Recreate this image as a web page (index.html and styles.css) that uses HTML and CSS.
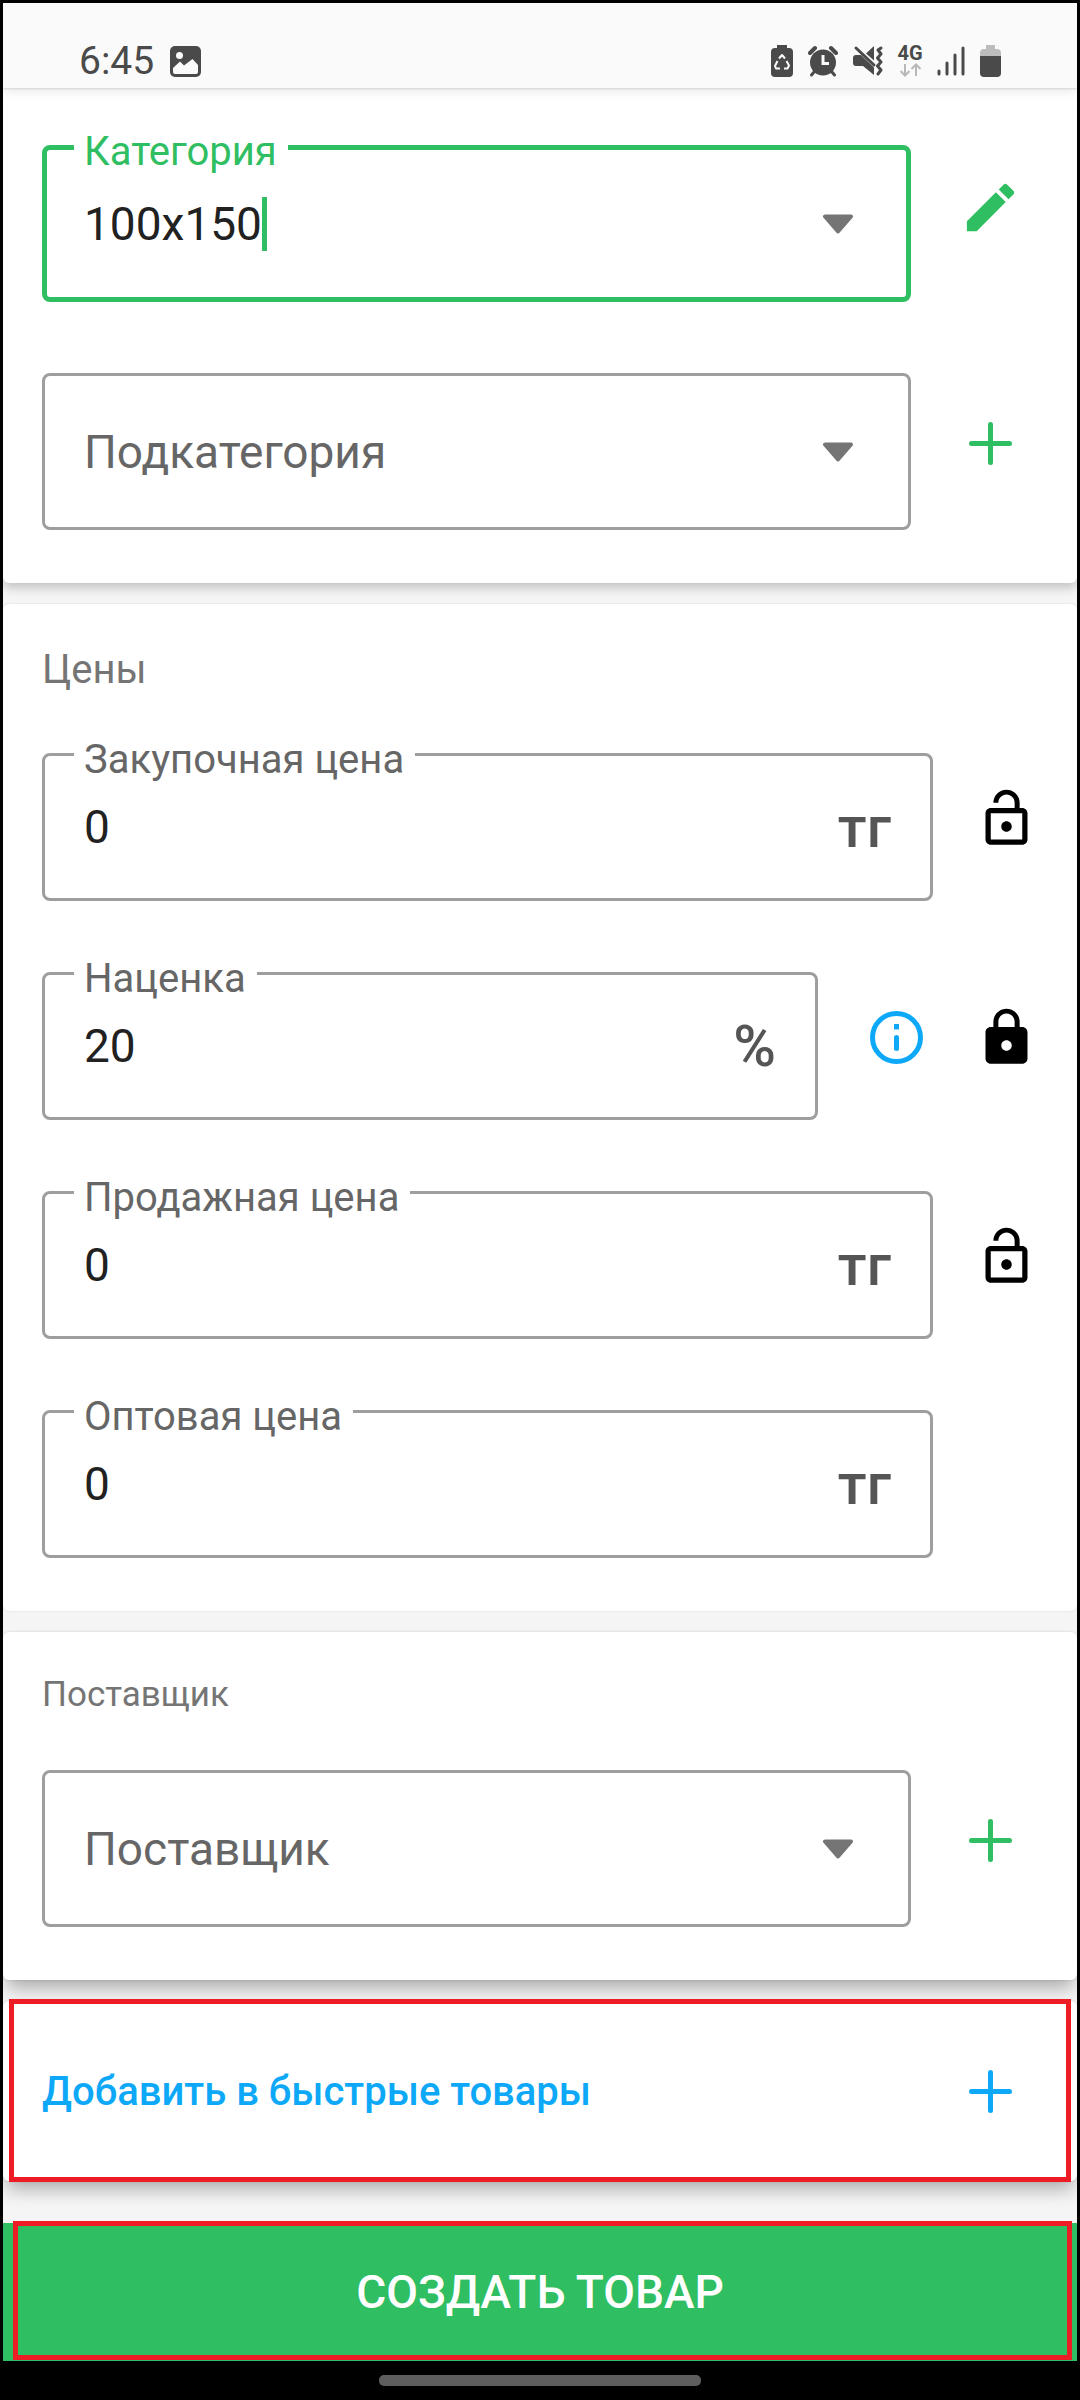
FILE: index.html
```html
<!DOCTYPE html>
<html lang="ru">
<head>
<meta charset="utf-8">
<meta name="viewport" content="width=device-width, initial-scale=1">
<title>Создать товар</title>
<link rel="stylesheet" href="styles.css">
</head>
<body>
<svg class="sprite" aria-hidden="true">
  <symbol id="plus" viewBox="0 0 63 63"><path d="M31.500 12.500v38M12.500 31.500h38" fill="none" stroke="currentColor" stroke-width="5" stroke-linecap="round"/></symbol>
  <symbol id="arrow" viewBox="0 0 32 20"><path d="M3 2.500h26L16 17.500z" fill="currentColor" stroke="currentColor" stroke-width="4" stroke-linejoin="round"/></symbol>
  <symbol id="lock-open" viewBox="0 0 24 24"><path fill="currentColor" d="M12 17c1.100 0 2-.9 2-2s-.9-2-2-2-2 .9-2 2 .9 2 2 2zm6-9h-1V6c0-2.760-2.240-5-5-5S7 3.240 7 6h1.900c0-1.710 1.390-3.100 3.100-3.100 1.710 0 3.100 1.390 3.100 3.100v2H6c-1.100 0-2 .9-2 2v10c0 1.100.9 2 2 2h12c1.100 0 2-.9 2-2V10c0-1.100-.9-2-2-2zm0 12H6V10h12v10z"/></symbol>
</svg>

<header class="status">
  <div class="status-group">
    <span class="clock">6:45</span>
    <svg class="status-icon" width="32" height="34" viewBox="0 0 32 34" aria-hidden="true">
      <rect x="0" y="2" width="31" height="31" rx="5" fill="#4a4a4a"/>
      <circle cx="9.500" cy="11.500" r="3.500" fill="#fafafa"/>
      <path d="M3 24l7-6.500 4 4L22.500 15l5.500 6v7q0 2-2 2H5q-2 0-2-2z" fill="#fafafa"/>
    </svg>
  </div>
  <div class="status-group status-group--end">
    <svg width="22" height="34" viewBox="0 0 22 34" aria-hidden="true">
      <path d="M6 1h10v3h2q4 0 4 4v21q0 4-4 4H4q-4 0-4-4V8q0-4 4-4h2z" fill="#4a4a4a"/>
      <path d="M8 14.500l3-3.500 3 3.500M15.500 17l2.500 4.500-1.500 3H13M9 24.500H5L4 22l2.500-5" fill="none" stroke="#fafafa" stroke-width="2" stroke-linejoin="round"/>
    </svg>
    <svg width="30" height="34" viewBox="0 0 30 34" aria-hidden="true">
      <circle cx="15" cy="18.500" r="13" fill="#4a4a4a"/>
      <path d="M2 9l5-5M28 9l-5-5" stroke="#4a4a4a" stroke-width="4" stroke-linecap="round"/>
      <path d="M6 28l-2.500 3M24 28l2.500 3" stroke="#4a4a4a" stroke-width="3" stroke-linecap="round"/>
      <path d="M15 11v8.500h6" fill="none" stroke="#fafafa" stroke-width="3"/>
    </svg>
    <svg width="30" height="34" viewBox="0 0 30 34" aria-hidden="true">
      <path d="M0 14q0-3 3-3h5l13 12.500V31L10 22H3q-3 0-3-3zM13 9.500L21 2v14.500z" fill="#4a4a4a"/>
      <path d="M3 4l18 17" stroke="#4a4a4a" stroke-width="3" stroke-linecap="round"/>
      <path d="M28 4l-3 2 3 4-3.500 4 3.500 4-3.500 4 3.500 4-3 4" fill="none" stroke="#4a4a4a" stroke-width="3" stroke-linejoin="round" stroke-linecap="round"/>
    </svg>
    <div class="network">
      <span class="network-type">4G</span>
      <svg width="22" height="14" viewBox="0 0 22 14" aria-hidden="true"><path d="M6 1v11M1.500 8L6 12.500 10.500 8M17 13V2M12.500 6L17 1.500 21.500 6" fill="none" stroke="#b8b8b8" stroke-width="2"/></svg>
    </div>
    <svg width="28" height="34" viewBox="0 0 28 34" aria-hidden="true"><path d="M2 27v3M10 19v11M18 11v19M26 4v26" stroke="#4a4a4a" stroke-width="3" stroke-linecap="round"/></svg>
    <svg width="22" height="34" viewBox="0 0 22 34" aria-hidden="true">
      <path d="M6 1h9v4h2q4 0 4 4v4H0V9q0-4 4-4h2z" fill="#bcbcbc"/>
      <path d="M0 12h21v17q0 4-4 4H4q-4 0-4-4z" fill="#4a4a4a"/>
    </svg>
  </div>
</header>

<main class="form">
  <section class="card card--first">
    <div class="row row--picker">
      <div class="field field--tall field--active">
        <label class="field-label" for="category">Категория</label>
        <input class="field-input field-input--editing" id="category" type="text" value="100x150">
        <span class="caret"></span>
        <svg class="field-arrow" aria-hidden="true"><use href="#arrow"/></svg>
      </div>
      <button class="icon-button icon-button--raised" type="button" aria-label="Изменить категорию">
        <svg class="icon icon--green" viewBox="0 0 24 24"><path fill="currentColor" d="M3 17.250V21h3.750L17.810 9.940l-3.750-3.750L3 17.250zM20.710 7.040c.39-.39.39-1.020 0-1.410l-2.340-2.340c-.39-.39-1.020-.39-1.410 0l-1.830 1.830 3.750 3.750 1.830-1.830z"/></svg>
      </button>
    </div>
    <div class="row row--picker">
      <div class="field field--tall">
        <select class="field-select" aria-label="Подкатегория"><option>Подкатегория</option></select>
        <svg class="field-arrow" aria-hidden="true"><use href="#arrow"/></svg>
      </div>
      <button class="icon-button" type="button" aria-label="Добавить подкатегорию"><svg class="icon icon--green"><use href="#plus"/></svg></button>
    </div>
  </section>

  <section class="card card--flat">
    <h2 class="title">Цены</h2>
    <div class="row">
      <div class="field">
        <label class="field-label" for="purchase">Закупочная цена</label>
        <input class="field-input" id="purchase" type="text" inputmode="decimal" value="0">
        <span class="suffix">тг</span>
      </div>
      <button class="icon-button" type="button" aria-label="Закрепить закупочную цену"><svg class="icon"><use href="#lock-open"/></svg></button>
    </div>
    <div class="row row--markup">
      <div class="field">
        <label class="field-label" for="markup">Наценка</label>
        <input class="field-input" id="markup" type="text" inputmode="decimal" value="20">
        <span class="suffix">%</span>
      </div>
      <button class="icon-button" type="button" aria-label="О наценке">
        <svg class="icon icon--blue" viewBox="0 0 63 63"><circle cx="31.500" cy="31.500" r="24" fill="none" stroke="currentColor" stroke-width="5"/><path d="M29 18h5v5.500h-5z" fill="currentColor"/><path d="M31.500 31.500v11" stroke="currentColor" stroke-width="5" stroke-linecap="round"/></svg>
      </button>
      <button class="icon-button" type="button" aria-label="Открепить наценку">
        <svg class="icon" viewBox="0 0 24 24"><path fill="currentColor" d="M18 8h-1V6c0-2.760-2.240-5-5-5S7 3.240 7 6v2H6c-1.100 0-2 .9-2 2v10c0 1.100.9 2 2 2h12c1.100 0 2-.9 2-2V10c0-1.100-.9-2-2-2zm-6 9c-1.100 0-2-.9-2-2s.9-2 2-2 2 .9 2 2-.9 2-2 2zM8.900 8V6c0-1.710 1.390-3.100 3.100-3.100s3.100 1.390 3.100 3.100v2H8.900z"/></svg>
      </button>
    </div>
    <div class="row">
      <div class="field">
        <label class="field-label" for="selling">Продажная цена</label>
        <input class="field-input" id="selling" type="text" inputmode="decimal" value="0">
        <span class="suffix">тг</span>
      </div>
      <button class="icon-button" type="button" aria-label="Закрепить продажную цену"><svg class="icon"><use href="#lock-open"/></svg></button>
    </div>
    <div class="row row--no-action">
      <div class="field">
        <label class="field-label" for="wholesale">Оптовая цена</label>
        <input class="field-input" id="wholesale" type="text" inputmode="decimal" value="0">
        <span class="suffix">тг</span>
      </div>
    </div>
  </section>

  <section class="card card--raised">
    <h2 class="title title--small">Поставщик</h2>
    <div class="row row--picker">
      <div class="field field--tall">
        <select class="field-select" aria-label="Поставщик"><option>Поставщик</option></select>
        <svg class="field-arrow" aria-hidden="true"><use href="#arrow"/></svg>
      </div>
      <button class="icon-button" type="button" aria-label="Добавить поставщика"><svg class="icon icon--green"><use href="#plus"/></svg></button>
    </div>
  </section>

  <button class="quick marked card--raised" type="button">
    <span>Добавить в быстрые товары</span>
    <svg class="icon" aria-hidden="true"><use href="#plus"/></svg>
  </button>
</main>

<button class="submit marked marked--submit" type="button">СОЗДАТЬ ТОВАР</button>
<footer class="navbar"><span class="navbar-handle"></span></footer>
</body>
</html>
```

FILE: styles.css
```css
:root {
  --green: #2fbe61;
  --blue: #0ea8f8;
  --outline: #9e9e9e;
  --mark: #ee1c25;
}

* { box-sizing: border-box; }

body {
  margin: 0;
  min-height: 100vh;
  padding: 3px 3px 0;
  display: flex;
  flex-direction: column;
  background: #000;
  color: #212121;
  font-family: Roboto, "Noto Sans", sans-serif;
}

button, input, select { font: inherit; color: inherit; }

button {
  padding: 0;
  border: 0;
  background: none;
}

.sprite {
  position: absolute;
  width: 0;
  height: 0;
}

/* Status bar */
.status {
  position: relative;
  z-index: 5;
  display: flex;
  justify-content: space-between;
  align-items: flex-end;
  height: 85px;
  padding: 0 75px 10px 76px;
  background: #fafafa;
  box-shadow: 0 1px 2px rgba(0, 0, 0, .12), 0 4px 10px rgba(0, 0, 0, .08);
}

.status-group {
  display: flex;
  align-items: center;
  gap: 16px;
}

.status-group--end { gap: 15px; }

.clock {
  color: #4a4a4a;
  font-size: 39px;
  line-height: 34px;
}

.network {
  display: flex;
  flex-direction: column;
  align-items: center;
  width: 24px;
  height: 34px;
}

.network-type {
  color: #4a4a4a;
  font-size: 20px;
  font-weight: 700;
  line-height: 19px;
}

/* Cards */
.form {
  flex: 1;
  display: flex;
  flex-direction: column;
  gap: 21px;
  padding-bottom: 42px;
  background: #f5f5f5;
}

.card {
  position: relative;
  display: flex;
  flex-direction: column;
  gap: 55px;
  padding: 43px 39px 53px;
  border-radius: 6px;
  background: #fff;
  box-shadow: 0 4px 12px rgba(0, 0, 0, .24);
}

.card--first {
  padding-top: 41px;
  border-radius: 0 0 6px 6px;
}

.card--flat { box-shadow: 0 0 2px rgba(0, 0, 0, .14); }

.card--raised { box-shadow: 0 12px 18px -4px rgba(0, 0, 0, .3), 0 0 3px rgba(0, 0, 0, .14); }

.title {
  margin: 0 0 -11px;
  color: #757575;
  font-size: 40px;
  font-weight: 400;
  line-height: 46px;
}

.title--small {
  margin-bottom: -16px;
  font-size: 35px;
  line-height: 40px;
}

/* Field rows: 16px on top leave room for the floating label */
.row {
  display: flex;
  align-items: center;
  gap: 42px;
  padding-top: 16px;
}

.row > .icon-button { margin-top: -18px; }

.row--picker {
  gap: 48px;
  padding-right: 16px;
}

.row--picker > .icon-button { margin-top: -16px; }

.row--markup { gap: 47px; }

.row--no-action { padding-right: 105px; }

.field {
  position: relative;
  flex: 1;
  min-width: 0;
  display: flex;
  align-items: center;
  height: 148px;
  padding: 0 39px;
  border: 3px solid var(--outline);
  border-radius: 8px;
}

.field--tall {
  height: 157px;
  padding-right: 54px;
}

.field--active {
  padding: 0 52px 0 37px;
  border: 5px solid var(--green);
}

.field-label {
  position: absolute;
  top: -19px;
  left: 29px;
  padding: 0 11px 0 10px;
  background: #fff;
  color: #666;
  font-size: 40px;
  line-height: 46px;
}

.field--active .field-label {
  top: -21px;
  left: 27px;
  color: var(--green);
}

.field-input, .field-select {
  flex: 1;
  min-width: 0;
  height: 60px;
  padding: 0;
  border: 0;
  outline: 0;
  background: none;
  font-size: 46px;
}

.field-input--editing {
  flex: none;
  field-sizing: content;
}

.field-select {
  appearance: none;
  color: #666;
}

.caret {
  width: 5px;
  height: 54px;
  background: var(--green);
}

.field-arrow {
  flex: none;
  width: 32px;
  height: 20px;
  margin-left: auto;
  color: #757575;
}

.suffix {
  color: #555;
  font-size: 58px;
  font-weight: 500;
  line-height: 60px;
}

.icon-button {
  display: flex;
  flex: none;
  color: #000;
}

.row > .icon-button--raised { margin-top: -32px; }

.icon {
  flex: none;
  width: 63px;
  height: 63px;
}

.icon--green { color: var(--green); }
.icon--blue { color: var(--blue); }

/* Actions */
.quick {
  display: flex;
  justify-content: space-between;
  align-items: center;
  height: 180px;
  padding: 0 55px 0 39px;
  border-radius: 6px;
  background: #fff;
  color: var(--blue);
  font-size: 40px;
  font-weight: 500;
}

.submit {
  height: 138px;
  background: var(--green);
  color: #fff;
  font-size: 46px;
  font-weight: 500;
}

/* Red frame laid over a control */
.marked { position: relative; }

.marked::after {
  content: "";
  position: absolute;
  inset: -2px 6px -1px;
  border: 5px solid var(--mark);
}

.marked--submit::after { inset: -2px 5px 1px 10px; }

.navbar {
  display: flex;
  justify-content: center;
  padding: 14px 0;
}

.navbar-handle {
  width: 30%;
  height: 11px;
  border-radius: 5px;
  background: #5e5e5e;
}
```
